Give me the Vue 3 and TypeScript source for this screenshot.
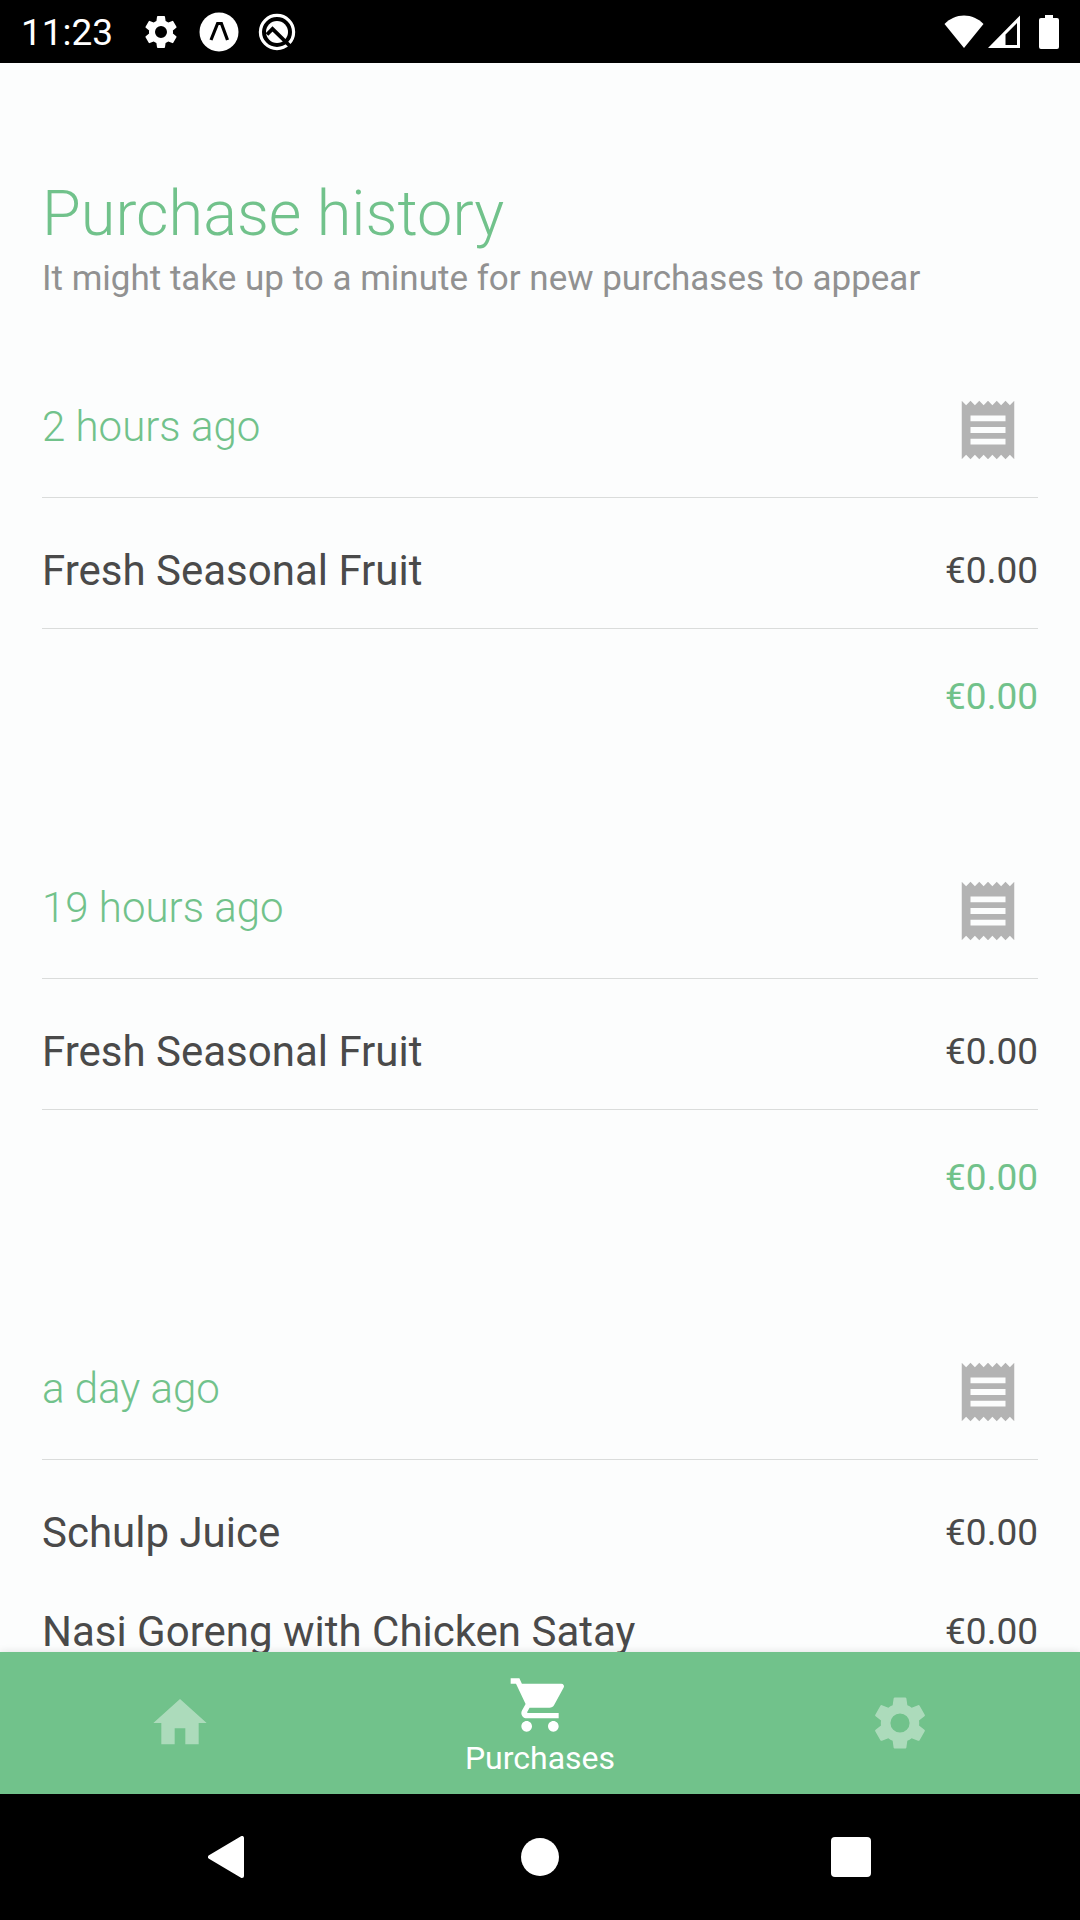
<script setup lang="ts">
import { ref } from 'vue'

interface PurchaseItem {
  name: string
  price: string
}

interface Purchase {
  when: string
  items: PurchaseItem[]
  total?: string
}

const purchases: Purchase[] = [
  { when: '2 hours ago', items: [{ name: 'Fresh Seasonal Fruit', price: '€0.00' }], total: '€0.00' },
  { when: '19 hours ago', items: [{ name: 'Fresh Seasonal Fruit', price: '€0.00' }], total: '€0.00' },
  {
    when: 'a day ago',
    items: [
      { name: 'Schulp Juice', price: '€0.00' },
      { name: 'Nasi Goreng with Chicken Satay', price: '€0.00' },
    ],
  },
]

const gear =
  'M19.14 12.94c.04-.3.06-.61.06-.94s-.02-.64-.07-.94l2.03-1.58a.49.49 0 0 0 .12-.61l-1.92-3.32a.49.49 0 0 0-.59-.22l-2.39.96a7 7 0 0 0-1.62-.94l-.36-2.54a.48.48 0 0 0-.48-.41h-3.84a.47.47 0 0 0-.47.41l-.36 2.54c-.59.24-1.13.57-1.62.94l-2.39-.96a.48.48 0 0 0-.59.22L2.74 8.87a.47.47 0 0 0 .12.61l2.03 1.58c-.05.3-.09.63-.09.94s.02.64.07.94l-2.03 1.58a.49.49 0 0 0-.12.61l1.92 3.32c.12.22.37.29.59.22l2.39-.96c.5.38 1.03.7 1.62.94l.36 2.54c.05.24.24.41.48.41h3.84c.24 0 .44-.17.47-.41l.36-2.54a7 7 0 0 0 1.62-.94l2.39.96c.22.08.47 0 .59-.22l1.92-3.32a.47.47 0 0 0-.12-.61zM12 15.6a3.6 3.6 0 1 1 0-7.2 3.6 3.6 0 0 1 0 7.2z'

const tabs = [
  { label: 'Home', path: 'M10 20v-6h4v6h5v-8h3L12 3 2 12h3v8z' },
  {
    label: 'Purchases',
    path: 'M7 18c-1.1 0-1.99.9-1.99 2S5.9 22 7 22s2-.9 2-2-.9-2-2-2zM1 2v2h2l3.6 7.59-1.35 2.45c-.16.28-.25.61-.25.96 0 1.1.9 2 2 2h12v-2H7.42c-.14 0-.25-.11-.25-.25l.03-.12.9-1.63h7.45c.75 0 1.41-.41 1.75-1.03l3.58-6.49A1 1 0 0 0 20 4H5.21l-.94-2zm16 16c-1.1 0-1.99.9-1.99 2s.89 2 1.99 2 2-.9 2-2-.9-2-2-2z',
  },
  { label: 'Settings', path: gear },
]

const active = ref('Purchases')
</script>

<template>
  <div class="screen">
    <header class="status">
      <span class="clock">11:23</span>
      <svg class="note" viewBox="0 0 24 24" aria-hidden="true"><path :d="gear" fill="#fff" /></svg>
      <svg class="note" viewBox="0 0 40 40" aria-hidden="true">
        <circle cx="20" cy="20" r="19.5" fill="#fff" />
        <path d="M12 28 18.600 11.500h3.800L28.500 28" fill="none" stroke="#000" stroke-width="3.200" />
      </svg>
      <svg class="note" viewBox="0 0 40 40" aria-hidden="true">
        <circle cx="20" cy="20" r="16.6" fill="none" stroke="#fff" stroke-width="3.2" />
        <circle cx="20" cy="20" r="11" fill="#fff" />
        <path d="M10 22.500 15.500 17 34 35" fill="none" stroke="#000" stroke-width="3.8" />
      </svg>
      <div class="system">
        <svg width="40" height="34" viewBox="0 0 40 34" aria-hidden="true">
          <path d="M.5 9C6 3.500 12.500.5 20 .5S34 3.500 39.500 9L20 33z" fill="#fff" />
        </svg>
        <svg width="34" height="34" viewBox="0 0 34 34" aria-hidden="true">
          <path d="M33 .5V33H1zM30 8 18.500 19.500V30H30z" fill="#fff" fill-rule="evenodd" />
        </svg>
        <svg class="battery" width="20" height="34" viewBox="0 0 20 34" aria-hidden="true">
          <path d="M6 0h8v3h4a2 2 0 0 1 2 2v27a2 2 0 0 1-2 2H2a2 2 0 0 1-2-2V5a2 2 0 0 1 2-2h4z" fill="#fff" />
        </svg>
      </div>
    </header>

    <main class="content">
      <h1>Purchase history</h1>
      <p class="hint">It might take up to a minute for new purchases to appear</p>

      <section v-for="purchase in purchases" :key="purchase.when" class="purchase">
        <div class="head">
          <h2>{{ purchase.when }}</h2>
          <button class="receipt" type="button" aria-label="Show receipt">
            <svg viewBox="0 0 24 24" aria-hidden="true">
              <path
                d="M18 17H6v-2h12zm0-4H6v-2h12zm0-4H6V7h12zM3 22l1.500-1.500L6 22l1.500-1.500L9 22l1.500-1.500L12 22l1.500-1.500L15 22l1.500-1.500L18 22l1.500-1.500L21 22V2l-1.500 1.500L18 2l-1.500 1.500L15 2l-1.500 1.500L12 2l-1.500 1.500L9 2 7.500 3.500 6 2 4.500 3.500 3 2z"
                fill="#b3b3b3"
              />
            </svg>
          </button>
        </div>
        <ul class="items">
          <li v-for="item in purchase.items" :key="item.name">
            <span class="name">{{ item.name }}</span>
            <span class="price">{{ item.price }}</span>
          </li>
        </ul>
        <p v-if="purchase.total" class="price total">{{ purchase.total }}</p>
      </section>
    </main>

    <nav class="tabs" aria-label="Main">
      <button
        v-for="tab in tabs"
        :key="tab.label"
        type="button"
        :class="{ active: tab.label === active }"
        :aria-label="tab.label"
        @click="active = tab.label"
      >
        <svg viewBox="0 0 24 24" aria-hidden="true"><path :d="tab.path" fill="#fff" /></svg>
        <span v-if="tab.label === active">{{ tab.label }}</span>
      </button>
    </nav>

    <footer class="system-nav">
      <button type="button" aria-label="Back">
        <svg viewBox="0 0 42 42" aria-hidden="true">
          <path d="M2 21 34 2v38z" fill="#fff" stroke="#fff" stroke-width="4" stroke-linejoin="round" />
        </svg>
      </button>
      <button type="button" aria-label="Home">
        <svg viewBox="0 0 42 42" aria-hidden="true"><circle cx="21" cy="21" r="19" fill="#fff" /></svg>
      </button>
      <button type="button" aria-label="Recent apps">
        <svg viewBox="0 0 42 42" aria-hidden="true">
          <rect x="1" y="1" width="40" height="40" rx="4" fill="#fff" />
        </svg>
      </button>
    </footer>
  </div>
</template>

<style>
body {
  margin: 0;
}
</style>

<style scoped>
.screen {
  display: flex;
  flex-direction: column;
  height: 100vh;
  background: #fcfdfd;
  color: #4a4a4a;
  font-family: Roboto, 'Liberation Sans', sans-serif;
}

h1,
h2,
p,
ul {
  margin: 0;
  padding: 0;
}

button {
  padding: 0;
  border: 0;
  background: none;
  color: inherit;
  font-family: inherit;
}

svg {
  display: block;
}

.status {
  display: flex;
  flex: none;
  align-items: center;
  gap: 18px;
  height: 63px;
  padding: 0 21px;
  background: #000;
  color: #fff;
}

.clock {
  margin-right: 10px;
  padding-top: 2px;
  font-size: 37px;
  line-height: 44px;
}

.note {
  width: 40px;
  height: 40px;
}

.system {
  display: flex;
  gap: 3px;
  margin-left: auto;
}

.battery {
  margin-left: 15px;
}

.content {
  flex: 1;
  min-height: 0;
  overflow: hidden;
  padding: 114px 42px 0;
}

h1 {
  color: #71c28b;
  font-size: 63px;
  font-weight: 300;
  line-height: 74px;
}

.hint {
  color: #919191;
  font-size: 35px;
  line-height: 56px;
}

.purchase {
  height: 481px;
}

.hint + .purchase {
  margin-top: 55px;
}

.head {
  display: flex;
  align-items: center;
  justify-content: space-between;
  height: 135px;
  padding-right: 15px;
  border-bottom: 1px solid #dadcdb;
}

h2 {
  padding-bottom: 6px;
  color: #71c28b;
  font-size: 42px;
  font-weight: 300;
  line-height: 50px;
}

.receipt svg {
  width: 70px;
  height: 70px;
}

.items {
  padding: 23px 0 8px;
  border-bottom: 1px solid #dadcdb;
  list-style: none;
}

.items li {
  display: flex;
  align-items: center;
  justify-content: space-between;
  height: 99px;
}

.name {
  font-size: 42px;
  line-height: 50px;
}

.price {
  font-size: 37px;
  line-height: 44px;
}

.total {
  padding-top: 46px;
  color: #71c28b;
  text-align: right;
}

.tabs {
  position: relative;
  display: flex;
  flex: none;
  height: 142px;
  background: #71c28b;
  box-shadow: 0 0 8px rgba(0, 0, 0, 0.12);
  color: #fff;
}

.tabs button {
  display: flex;
  flex: 1;
  flex-direction: column;
  align-items: center;
  justify-content: center;
  font-size: 32px;
  line-height: 38px;
}

.tabs svg {
  width: 64px;
  height: 64px;
  opacity: 0.42;
}

.tabs .active {
  padding-top: 4px;
}

.tabs .active svg {
  margin-bottom: 2px;
  opacity: 1;
}

.system-nav {
  display: flex;
  flex: none;
  justify-content: center;
  height: 126px;
  background: #000;
}

.system-nav button {
  display: flex;
  flex: 0 0 28.8%;
  align-items: center;
  justify-content: center;
}

.system-nav svg {
  width: 42px;
  height: 42px;
}
</style>
